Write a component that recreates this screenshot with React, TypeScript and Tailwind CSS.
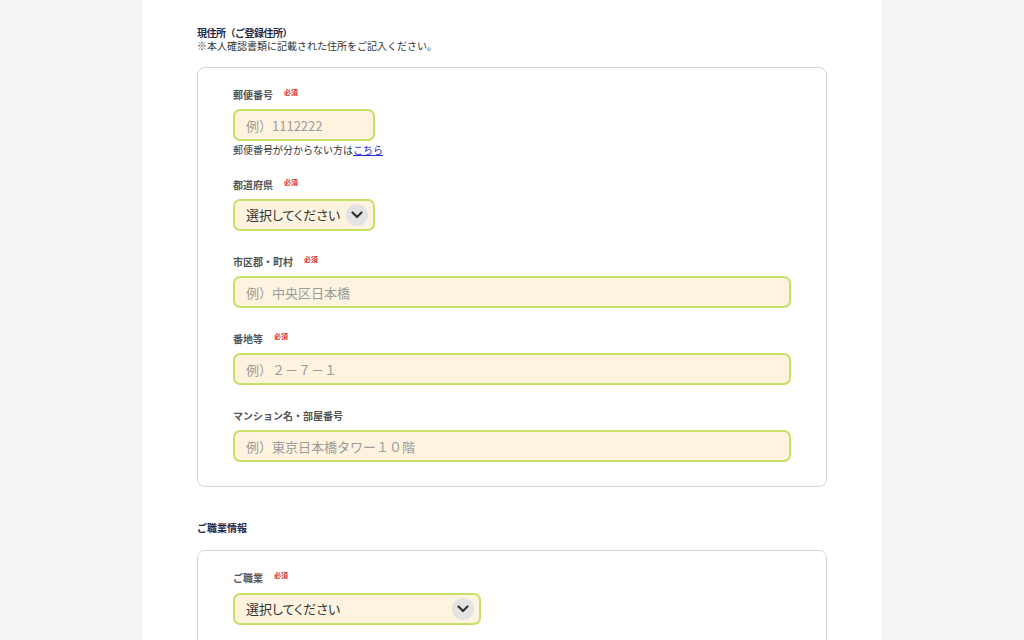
const font = { fontFamily: '"Noto Sans CJK JP", "Noto Sans", sans-serif' };

const Required = () => (
  <span className="ml-[11px] text-[7px] font-bold leading-none text-[#d8322f] relative -top-[2px]">必須</span>
);

const Label = ({ text, required }: { text: string; required?: boolean }) => (
  <div className="flex items-center h-[16px] text-[10px] font-bold text-[#555555]">
    <span>{text}</span>
    {required && <Required />}
  </div>
);

const TextInput = ({ placeholder, width }: { placeholder: string; width: string }) => (
  <input
    type="text"
    placeholder={placeholder}
    className={`${width} h-[32px] rounded-[7px] border-2 border-[#c6e166] bg-[#fdf3df] px-[11px] text-[13px] text-[#333] placeholder:text-[#9c9c9c] outline-none`}
    style={font}
  />
);

const Chevron = () => (
  <span className="flex h-[22px] w-[22px] shrink-0 items-center justify-center rounded-full bg-[#e3e3e3]">
    <svg width="12" height="8" viewBox="0 0 12 8" fill="none">
      <path d="M1.5 1.5 L6 6 L10.5 1.5" stroke="#333" strokeWidth="2.2" strokeLinecap="round" strokeLinejoin="round" />
    </svg>
  </span>
);

const SelectBox = ({ width }: { width: string }) => (
  <div className={`${width} h-[32px] flex items-center justify-between rounded-[7px] border-2 border-[#c6e166] bg-[#fdf3df] pl-[11px] pr-[5px] text-[13px] text-[#333]`}>
    <span className="whitespace-nowrap" style={{ fontFeatureSettings: '"palt"' }}>選択してください</span>
    <Chevron />
  </div>
);

export default function App() {
  return (
    <div className="min-h-[640px] bg-[#f5f5f5]" style={font}>
      <div className="mx-auto w-[740px] min-h-[640px] bg-white px-[55px] pt-[26px] pb-10">
        <h2 className="text-[10px] leading-[13px] font-bold tracking-[-0.5px] text-[#1f2947]">現住所（ご登録住所）</h2>
        <p className="text-[10px] leading-[13px] text-[#333]">※本人確認書類に記載された住所をご記入ください。</p>

        <div className="mt-[15px] rounded-[8px] border border-[#d6d6d6] pl-[35px] pr-[35px] pt-[18px] pb-[24px]">
          <Label text="郵便番号" required />
          <div className="mt-[7px]">
            <TextInput placeholder="例）1112222" width="w-[142px]" />
          </div>
          <p className="mt-[2px] text-[10px] leading-[14px] text-[#333]">
            郵便番号が分からない方は<a href="#" className="text-[#2a2ae0] underline">こちら</a>
          </p>

          <div className="mt-[19px]">
            <Label text="都道府県" required />
            <div className="mt-[7px]">
              <SelectBox width="w-[142px]" />
            </div>
          </div>

          <div className="mt-[22px]">
            <Label text="市区郡・町村" required />
            <div className="mt-[7px]">
              <TextInput placeholder="例）中央区日本橋" width="w-full" />
            </div>
          </div>

          <div className="mt-[22px]">
            <Label text="番地等" required />
            <div className="mt-[7px]">
              <TextInput placeholder="例）２－７－１" width="w-full" />
            </div>
          </div>

          <div className="mt-[22px]">
            <Label text="マンション名・部屋番号" />
            <div className="mt-[7px]">
              <TextInput placeholder="例）東京日本橋タワー１０階" width="w-full" />
            </div>
          </div>
        </div>

        <h2 className="mt-[33px] text-[10px] leading-[16px] font-bold text-[#1f2947]">ご職業情報</h2>

        <div className="mt-[14px] rounded-[8px] border border-[#d6d6d6] pl-[35px] pr-[35px] pt-[18px] pb-[24px]">
          <Label text="ご職業" required />
          <div className="mt-[8px]">
            <SelectBox width="w-[248px]" />
          </div>
        </div>
      </div>
    </div>
  );
}
